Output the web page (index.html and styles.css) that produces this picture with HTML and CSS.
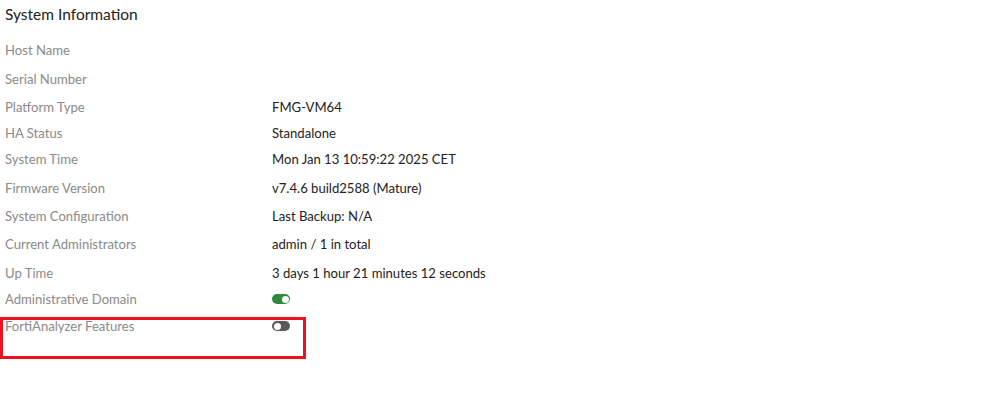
FILE: index.html
```html
<!DOCTYPE html>
<html>
<head>
<meta charset="utf-8">
<link rel="stylesheet" href="styles.css">
</head>
<body>
<div class="page">
  <h1 class="title">System Information</h1>
  <div class="info">
    <div class="label">Host Name</div><div class="value"></div>
    <div class="label">Serial Number</div><div class="value"></div>
    <div class="label">Platform Type</div><div class="value">FMG-VM64</div>
    <div class="label">HA Status</div><div class="value">Standalone</div>
    <div class="label">System Time</div><div class="value">Mon Jan 13 10:59:22 2025 CET</div>
    <div class="label">Firmware Version</div><div class="value">v7.4.6 build2588 (Mature)</div>
    <div class="label">System Configuration</div><div class="value">Last Backup: N/A</div>
    <div class="label">Current Administrators</div><div class="value">admin / 1 in total</div>
    <div class="label">Up Time</div><div class="value">3 days 1 hour 21 minutes 12 seconds</div>
    <div class="label">Administrative Domain</div><div class="value"><span class="toggle on"><span class="knob"></span></span></div>
    <div class="label">FortiAnalyzer Features</div><div class="value"><span class="toggle off"><span class="knob"></span></span></div>
  </div>
  <div class="highlight"></div>
</div>
</body>
</html>
```
FILE: styles.css
```css
html, body {
  margin: 0;
  padding: 0;
  background: #ffffff;
}
.page {
  position: relative;
  width: 999px;
  height: 403px;
  padding-left: 5px;
  box-sizing: border-box;
  font-family: Lato, "Open Sans", sans-serif;
}
.title {
  margin: 4px 0 0 0;
  font-size: 15.5px;
  line-height: 20px;
  font-weight: 400;
  color: #222222;
}
.info {
  margin-top: 18px;
  display: grid;
  grid-template-columns: 267px 1fr;
  grid-template-rows: 29px 28px 26px 26px 29px 28px 28px 29px 26px 27px 40px;
  font-size: 13.1px;
  line-height: 16px;
}
.label {
  color: #8a8a8a;
}
.value {
  color: #222222;
}
.toggle {
  display: inline-block;
  position: relative;
  width: 18px;
  height: 10px;
  border-radius: 5px;
  margin-top: 3px;
  vertical-align: top;
}
.toggle.on {
  background: #2f8a3f;
}
.toggle.off {
  background: #5a5a5a;
}
.knob {
  position: absolute;
  top: 1.5px;
  width: 7px;
  height: 7px;
  border-radius: 50%;
  background: #ffffff;
}
.toggle.on .knob {
  right: 1.5px;
}
.toggle.off .knob {
  left: 1.5px;
}
.highlight {
  position: absolute;
  left: 0;
  top: 313px;
  width: 306px;
  height: 42px;
  box-sizing: border-box;
  border: 3px solid #e8141f;
}
```
